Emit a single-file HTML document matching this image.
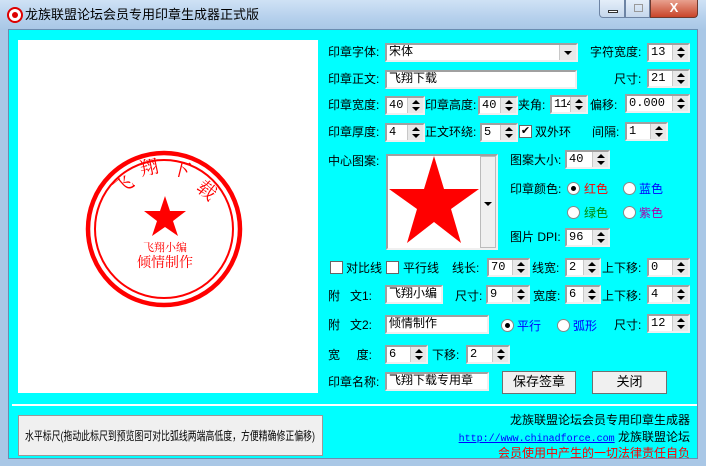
<!DOCTYPE html>
<html><head><meta charset="utf-8"><style>
*{margin:0;padding:0;box-sizing:border-box}
body{width:706px;height:466px;position:relative;overflow:hidden;background:#a9c7e6;font-family:"Liberation Sans","Noto Sans CJK SC",sans-serif;font-size:12px;color:#000}
.a{position:absolute;white-space:nowrap;line-height:18px}
#title{position:absolute;left:0;top:0;width:706px;height:30px;background:linear-gradient(#cfe2f5,#b5d0ec 60%,#a9c7e6)}
#client{position:absolute;left:8px;top:29px;width:690px;height:430px;background:#00ffff;border:1px solid #6b8cb0}
.in{position:absolute;background:#fff;border:2px solid;border-color:#a0a0a0 #f0f0f0 #f0f0f0 #a0a0a0;height:19px;padding-left:2px;line-height:15px;font-size:12px;font-family:"Liberation Mono","Noto Sans CJK SC",monospace;overflow:hidden;white-space:nowrap}
.sp{position:absolute;right:0;top:0;width:16px;height:15px;background:#e8e8e8;border-left:1px solid #c8c8c8}
.sp:before{content:"";position:absolute;left:4px;top:2px;border:4px solid transparent;border-top:0;border-bottom:4px solid #000}
.sp:after{content:"";position:absolute;left:4px;top:9px;border:4px solid transparent;border-bottom:0;border-top:4px solid #000}
.dd{position:absolute;right:0;top:0;width:17px;height:15px;background:#e8e8e8;border-left:1px solid #c8c8c8}
.dd:after{content:"";position:absolute;left:4px;top:6px;border:4px solid transparent;border-bottom:0;border-top:4px solid #000}
.cb{position:absolute;width:13px;height:13px;background:#fff;border:1px solid #666}
.rb{position:absolute;width:13px;height:13px;border-radius:50%;background:#fff;border:1px solid #888}
.rb.on:after{content:"";position:absolute;left:3px;top:3px;width:5px;height:5px;border-radius:50%;background:#000}
.btn{position:absolute;background:#f0f0f0;border:1px solid #707070;text-align:center;line-height:20px;font-size:13px}
</style></head><body>
<div id="title">
<svg style="position:absolute;left:7px;top:7px" width="16" height="16"><circle cx="8" cy="8" r="7" fill="#fff" stroke="#d00" stroke-width="2"/><circle cx="8" cy="8" r="3" fill="#d00"/></svg>
<div class="a" style="left:25px;top:6px;font-size:13px">龙族联盟论坛会员专用印章生成器正式版</div>
<div style="position:absolute;left:599px;top:0;width:26px;height:18px;border:1px solid #6d84a4;border-top:0;border-radius:0 0 0 4px;background:linear-gradient(#e4eef9,#c5d7ec)"><div style="position:absolute;left:8px;top:10px;width:10px;height:3px;background:#fff;border:1px solid #333"></div></div>
<div style="position:absolute;left:625px;top:0;width:25px;height:18px;border:1px solid #6d84a4;border-top:0;background:linear-gradient(#e4eef9,#c5d7ec)"><div style="position:absolute;left:8px;top:4px;width:9px;height:8px;border:1px solid #999"></div></div>
<div style="position:absolute;left:650px;top:0;width:48px;height:18px;border:1px solid #6d3a30;border-top:0;border-radius:0 0 4px 0;background:linear-gradient(#e8a18f,#c9452a);color:#fff;font-weight:bold;text-align:center;line-height:16px;font-size:13px">X</div>
</div>
<div id="client"></div>
<div style="position:absolute;left:18px;top:40px;width:300px;height:353px;background:#fff"></div>
<svg style="position:absolute;left:0;top:0" width="320" height="400">
<circle cx="164" cy="229" r="76" fill="none" stroke="#f00" stroke-width="4.5"/>
<circle cx="164" cy="229" r="69" fill="none" stroke="#f00" stroke-width="2"/>
<polygon points="165,196 170,211 186,211 173,221 178,236 165,227 152,236 157,221 144,211 160,211" fill="#f00"/>
<g font-family="Noto Serif CJK SC,serif" font-size="19" fill="#f00" text-anchor="middle">
<text y="7" transform="translate(123,185) rotate(-40)">飞</text>
<text y="7" transform="translate(149,167) rotate(-12)">翔</text>
<text y="7" transform="translate(181,169) rotate(14)">下</text>
<text y="7" transform="translate(207,190) rotate(40)">载</text>
</g>
<text x="165" y="251" font-family="Noto Serif CJK SC,serif" font-size="11" fill="#f00" text-anchor="middle">飞翔小编</text>
<text x="165" y="267" font-family="Noto Serif CJK SC,serif" font-size="14" fill="#f00" text-anchor="middle">倾情制作</text>
</svg>

<div class="a" style="left:328px;top:43px">印章字体:</div>
<div class="in" style="left:385px;top:43px;width:193px">宋体<div class="dd"></div></div>
<div class="a" style="left:590px;top:43px">字符宽度:</div>
<div class="in" style="left:647px;top:43px;width:43px">13<div class="sp"></div></div>

<div class="a" style="left:328px;top:70px">印章正文:</div>
<div class="in" style="left:385px;top:70px;width:192px">飞翔下载</div>
<div class="a" style="left:614px;top:70px">尺寸:</div>
<div class="in" style="left:647px;top:69px;width:43px">21<div class="sp"></div></div>

<div class="a" style="left:328px;top:96px">印章宽度:</div>
<div class="in" style="left:385px;top:96px;width:40px">40<div class="sp"></div></div>
<div class="a" style="left:425px;top:96px">印章高度:</div>
<div class="in" style="left:478px;top:96px;width:40px">40<div class="sp"></div></div>
<div class="a" style="left:518px;top:96px">夹角:</div>
<div class="in" style="left:550px;top:95px;width:38px;letter-spacing:-1px">114<div class="sp"></div></div>
<div class="a" style="left:590px;top:96px">偏移:</div>
<div class="in" style="left:625px;top:94px;width:65px">0.000<div class="sp"></div></div>

<div class="a" style="left:328px;top:123px">印章厚度:</div>
<div class="in" style="left:385px;top:123px;width:40px">4<div class="sp"></div></div>
<div class="a" style="left:425px;top:123px">正文环绕:</div>
<div class="in" style="left:480px;top:123px;width:38px">5<div class="sp"></div></div>
<div class="cb" style="left:519px;top:125px;font-size:11px;line-height:11px;text-align:center">✔</div>
<div class="a" style="left:535px;top:123px">双外环</div>
<div class="a" style="left:592px;top:123px">间隔:</div>
<div class="in" style="left:625px;top:122px;width:43px">1<div class="sp"></div></div>

<div class="a" style="left:328px;top:152px">中心图案:</div>
<div style="position:absolute;left:386px;top:154px;width:112px;height:96px;background:#fff;border:2px solid;border-color:#a0a0a0 #f0f0f0 #f0f0f0 #a0a0a0"></div>
<svg style="position:absolute;left:388px;top:156px" width="92" height="92"><polygon points="46,0 56,33 91,33 63,53 73,87 46,66 19,87 29,53 1,33 36,33" fill="#f00"/></svg>
<div style="position:absolute;left:480px;top:156px;width:16px;height:92px;background:#f0f0f0;border:1px solid #bbb"><div style="position:absolute;left:3px;top:45px;border:4px solid transparent;border-bottom:0;border-top:4px solid #000"></div></div>
<div class="a" style="left:510px;top:151px">图案大小:</div>
<div class="in" style="left:565px;top:150px;width:45px">40<div class="sp"></div></div>
<div class="a" style="left:510px;top:180px">印章颜色:</div>
<div class="rb on" style="left:567px;top:182px"></div><div class="a" style="left:584px;top:180px;color:#f00">红色</div>
<div class="rb" style="left:623px;top:182px"></div><div class="a" style="left:639px;top:180px;color:#00f">蓝色</div>
<div class="rb" style="left:567px;top:206px"></div><div class="a" style="left:584px;top:204px;color:#080">绿色</div>
<div class="rb" style="left:623px;top:206px"></div><div class="a" style="left:639px;top:204px;color:#a0a">紫色</div>
<div class="a" style="left:510px;top:228px">图片 DPI:</div>
<div class="in" style="left:565px;top:228px;width:45px">96<div class="sp"></div></div>

<div class="cb" style="left:330px;top:261px"></div><div class="a" style="left:346px;top:259px">对比线</div>
<div class="cb" style="left:386px;top:261px"></div><div class="a" style="left:403px;top:259px">平行线</div>
<div class="a" style="left:452px;top:259px">线长:</div>
<div class="in" style="left:487px;top:258px;width:43px">70<div class="sp"></div></div>
<div class="a" style="left:532px;top:259px">线宽:</div>
<div class="in" style="left:565px;top:258px;width:36px">2<div class="sp"></div></div>
<div class="a" style="left:602px;top:259px">上下移:</div>
<div class="in" style="left:647px;top:258px;width:43px">0<div class="sp"></div></div>

<div class="a" style="left:328px;top:287px">附&nbsp;&nbsp;&nbsp;文1:</div>
<div class="in" style="left:385px;top:285px;width:58px">飞翔小编</div>
<div class="a" style="left:455px;top:287px">尺寸:</div>
<div class="in" style="left:486px;top:285px;width:44px">9<div class="sp"></div></div>
<div class="a" style="left:533px;top:287px">宽度:</div>
<div class="in" style="left:565px;top:285px;width:36px">6<div class="sp"></div></div>
<div class="a" style="left:602px;top:287px">上下移:</div>
<div class="in" style="left:647px;top:285px;width:43px">4<div class="sp"></div></div>

<div class="a" style="left:328px;top:316px">附&nbsp;&nbsp;&nbsp;文2:</div>
<div class="in" style="left:385px;top:315px;width:104px">倾情制作</div>
<div class="rb on" style="left:501px;top:319px"></div><div class="a" style="left:517px;top:317px;color:#00f">平行</div>
<div class="rb" style="left:557px;top:319px"></div><div class="a" style="left:573px;top:317px;color:#00f">弧形</div>
<div class="a" style="left:614px;top:316px">尺寸:</div>
<div class="in" style="left:647px;top:314px;width:43px">12<div class="sp"></div></div>

<div class="a" style="left:328px;top:346px">宽&nbsp;&nbsp;&nbsp;&nbsp;&nbsp;度:</div>
<div class="in" style="left:385px;top:345px;width:43px">6<div class="sp"></div></div>
<div class="a" style="left:432px;top:346px">下移:</div>
<div class="in" style="left:466px;top:345px;width:44px">2<div class="sp"></div></div>

<div class="a" style="left:328px;top:373px">印章名称:</div>
<div class="in" style="left:385px;top:372px;width:104px">飞翔下载专用章</div>
<div class="btn" style="left:502px;top:371px;width:74px;height:23px">保存签章</div>
<div class="btn" style="left:592px;top:371px;width:75px;height:23px">关闭</div>

<div style="position:absolute;left:12px;top:404px;width:685px;height:2px;background:#fff"></div>
<div style="position:absolute;left:18px;top:415px;width:305px;height:41px;background:#f0f0f0;border:1px solid #999"></div>
<svg style="position:absolute;left:18px;top:415px" width="305" height="41"><text x="7" y="25" font-size="12" font-family="Liberation Sans,Noto Sans CJK SC,sans-serif" textLength="290" lengthAdjust="spacingAndGlyphs">水平标尺(拖动此标尺到预览图可对比弧线两端高低度，方便精确修正偏移)</text></svg>
<div class="a" style="right:16px;top:411px;font-size:12px">龙族联盟论坛会员专用印章生成器</div>
<div class="a" style="right:16px;top:428px;font-size:12px"><span style="color:#00f;text-decoration:underline;font-family:'Liberation Mono',monospace;font-size:10px">http://www.chinadforce.com</span> 龙族联盟论坛</div>
<div class="a" style="right:16px;top:444px;font-size:12px;color:#f00">会员使用中产生的一切法律责任自负</div>
</body></html>
